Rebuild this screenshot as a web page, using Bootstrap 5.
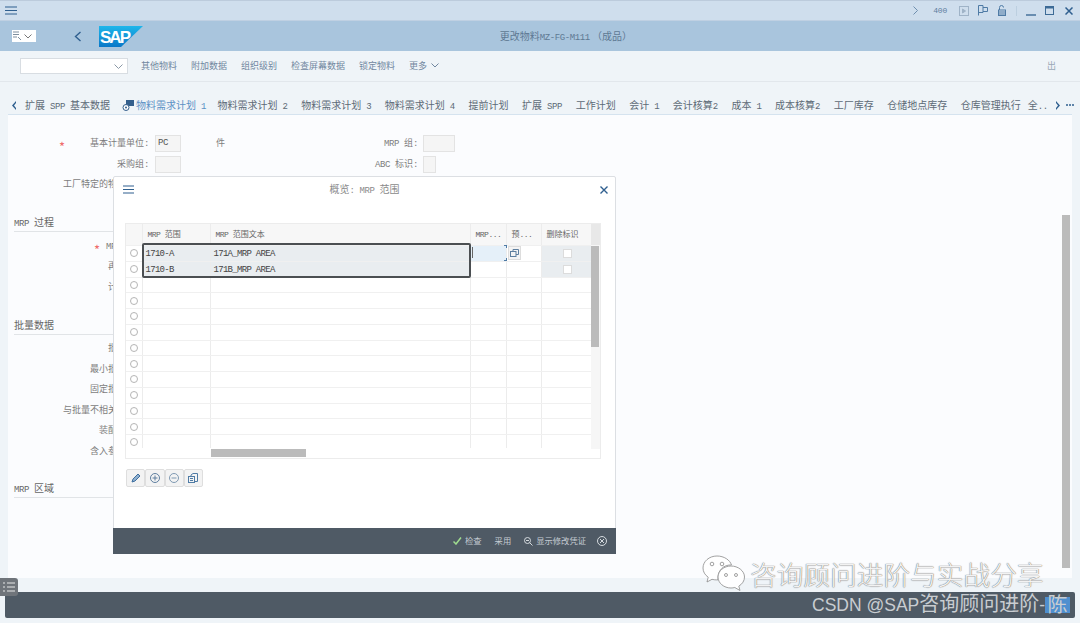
<!DOCTYPE html>
<html lang="zh">
<head>
  <meta charset="UTF-8" />
  <title>更改物料</title>
  <link href="https://cdn.jsdelivr.net/npm/bootstrap@5.3.3/dist/css/bootstrap.min.css" rel="stylesheet" />
  <style>
    html, body { height: 623px; overflow: hidden; }
    body { width: 1080px; background: #eff4f8; color: #7d7d7d; font: 9px/1.2 "Noto Sans CJK SC", sans-serif; position: relative; }
    .lt { font-family: "Liberation Mono", monospace; font-size: 9px; letter-spacing: -.4px; }
    svg { display: block; flex: none; }

    .top-strip { height: 21px; background: #cfdeed; border-top: 1px solid #bccbdc; border-bottom: 1px solid #bfd0e2; padding-left: 5px; padding-right: 7px; color: #5f7f9f; }
    .top-400 { font-size: 8px; margin-left: 15px; letter-spacing: -.2px; }
    .gap-play { margin-left: 12px; }
    .gap-10 { margin-left: 10px; }
    .gap-9 { margin-left: 9px; }
    .gap-11 { margin-left: 11px; }
    .top-sep { width: 1px; height: 10px; background: #bccfe0; margin-left: 10px; }

    .head-strip { height: 30px; background: #a9c5dd; position: relative; }
    .head-title { position: absolute; left: 52px; right: 0; top: 9px; text-align: center; font-size: 10px; color: #5e7993; }
    .tcode-box { margin-left: 12px; height: 12px; background: #fff; width: 24px; }
    .back-arrow { margin-left: 38px; }
    .sap-logo { margin-left: 17px; }

    .tool-strip { height: 31px; border-bottom: 1px solid #e2e7ec; padding-left: 20px; color: #7187a0; }
    .sel-box { width: 108px; height: 16px; background: #fff; border: 1px solid #d8dde2; margin-right: 13px; }
    .tool-a { margin-right: 14px; }
    .tool-out { margin-right: 24px; color: #9aa8b6; }

    .tab-strip { height: 33px; padding-top: 17px; font-size: 10px; color: #5d6a76; white-space: nowrap; border-bottom: 1px solid #d5e3ef; margin-left: 8px; margin-right: 8px; gap: 13.6px; position: relative; }
    .tab-prev { margin: 2px -5.6px 0 3px; }
    .tab-on { color: #5b90c4; position: relative; margin-left: 12.4px; margin-right: -2px; }
    .tab-on::after { content: ""; position: absolute; left: -18px; right: -5px; bottom: -6px; height: 2px; background: #5aa5d6; }
    .tab-icon { position: absolute; left: -14px; top: 1px; }
    .tab-clip { margin-left: -6.6px; }
    .tab-next { margin: 2px 0 0 -6.6px; }
    .tab-more { margin: 5px 0 0 -8.6px; }

    .work-area { height: 463px; margin-left: 8px; margin-right: 8px; background: #fbfcfe; padding-top: 20px; position: relative; }
    .frow { height: 20.5px; }
    .flabel { width: 141px; text-align: right; padding-top: 3px; white-space: nowrap; }
    .flabel-r1 { width: 193px; text-align: right; padding-top: 3px; }
    .flabel-r2 { width: 237px; text-align: right; padding-top: 3px; }
    .fbox { height: 17px; background: #f5f5f5; border: 1px solid #e3e3e3; margin-left: 6px; color: #555; padding-left: 2px; line-height: 15px; }
    .w-pc { width: 26px; }
    .w-mrp { width: 32px; margin-left: 5px; }
    .w-abc { width: 13px; margin-left: 5px; }
    .unit-txt { margin-left: 35px; padding-top: 3px; }
    .star { position: absolute; color: #ef6b6b; font-size: 13px; line-height: 1; }
    .star-a { left: 51px; top: 25px; }
    .star-b { left: 86px; top: 128px; }
    .sect { margin-left: 6px; width: 420px; border-bottom: 1px solid #e1e4e7; font-size: 10px; color: #666; height: 16px; }
    .sect-a { margin-top: 19px; }
    .sect-b { margin-top: 20px; }
    .sect-c { margin-top: 19px; }
    .sp-a { height: 6px; }
    .sp-b { height: 5px; }
    .main-thumb { position: absolute; right: 2px; top: 100px; width: 8px; height: 353px; background: #bbb; }

    .bottom-gap { height: 14px; }
    .foot-strip { height: 26px; margin-left: 5px; margin-right: 5px; background: #4f5a65; border-radius: 2px; }
    .list-chip { position: absolute; left: 0; top: 578px; width: 18px; height: 18px; background: #6f747a; border-radius: 0 3px 3px 0; }

    .over-modal { position: absolute; left: 113px; top: 176px; width: 503px; height: 378px; background: #fff; border: 1px solid #dcdfe3; border-radius: 2px; }
    .modal-head { height: 46px; padding: 0 7px 0 9px; position: relative; }
    .modal-burger { margin-top: 8px; }
    .modal-close { margin-top: 9px; position: relative; }
    .modal-name { position: absolute; left: 0; right: 0; top: 6px; text-align: center; font-size: 10px; color: #8a8a8a; }

    .grid-wrap { position: relative; margin-left: 11px; width: 476px; height: 236px; border: 1px solid #ececec; overflow: hidden; }
    .mrp-grid { table-layout: fixed; width: 465px; margin: 0; border-collapse: collapse; color: #555; }
    .mrp-grid th, .mrp-grid td { padding: 0 0 0 3px; border: 0; border-right: 1px solid #ececec; border-bottom: 1px solid #f0f0f0; background: transparent; box-shadow: none; color: inherit; font-weight: 400; overflow: hidden; white-space: nowrap; vertical-align: middle; }
    .mrp-grid th { height: 21px; background: #f7f7f7; font-size: 8px; padding-left: 5px; color: #666; }
    .mrp-grid th .lt { font-size: 8px; letter-spacing: -.5px; }
    .mrp-grid td { height: 15.75px; line-height: 14px; }
    .mrp-grid td .lt { font-size: 9px; letter-spacing: -.7px; color: #444; }
    .mrp-grid td.rad { padding: 0 0 0 4px; }
    .mrp-grid td.sel-cell { background: #e9edf0; }
    .mrp-grid td.cur-cell { background: #e5f0f9; }
    .c1 { width: 16px; } .c2 { width: 68px; } .c3 { width: 260px; } .c4 { width: 36px; } .c5 { width: 35px; } .c6 { width: 50px; }
    .rad-dot { width: 8px; height: 8px; border: 1px solid #b5b5b5; border-radius: 50%; background: #fff; }
    .chk-box { width: 9px; height: 9px; background: #fff; border: 1px solid #dcdcdc; margin: 0 auto; }
    .mini-btn { width: 13px; height: 14px; background: #f4f4f4; border: 1px solid #ddd; margin-left: -2px; }
    .row-frame { position: absolute; left: 16px; top: 19px; width: 329px; height: 35px; border: 2px solid #4b4f52; border-radius: 2px; pointer-events: none; }
    .cur-mark { position: absolute; left: 345px; top: 21px; width: 36px; height: 16px; }
    .cur-mark::before { content: ""; position: absolute; right: 0; top: 0; width: 3px; height: 3px; border-right: 1px solid #4f7ba5; border-top: 1px solid #4f7ba5; }
    .cur-mark::after { content: ""; position: absolute; right: 0; bottom: 0; width: 3px; height: 3px; border-right: 1px solid #4f7ba5; border-bottom: 1px solid #4f7ba5; }
    .cur-bar { position: absolute; left: 1px; top: 2px; width: 1px; height: 11px; background: #666; }
    .v-rail { position: absolute; right: 0; top: 0; width: 9px; height: 225px; background: #f6f6f6; }
    .v-top { position: absolute; right: 0; top: 0; width: 9px; height: 21px; background: #e8e8e8; }
    .v-thumb { position: absolute; right: 1px; top: 22px; width: 8px; height: 101px; background: #bbb; }
    .h-rail { position: absolute; left: 0; right: 0; top: 224px; height: 12px; background: #fff; }
    .h-thumb { position: absolute; left: 85px; top: 225px; width: 95px; height: 8px; background: #bbb; }

    .btn-row { margin: 10px 0 0 12px; height: 18px; }
    .btn-cell { width: 19.25px; height: 18px; background: #f3f3f3; border: 1px solid #dedede; border-radius: 2px; }

    .modal-foot { position: absolute; left: -1px; right: -1px; bottom: -1px; height: 26px; background: #4f5a65; color: #c5ccd3; padding-right: 9px; font-size: 8.3px; }
    .foot-check { margin-left: 3px; margin-right: 13px; }
    .foot-use { margin-right: 13px; }
    .foot-show { margin-left: 3px; margin-right: 11px; }

    .wm-icon { position: absolute; left: 702px; top: 555px; }
    .wm-text { position: absolute; left: 750px; top: 558px; font-size: 26.7px; line-height: 1.2; color: rgba(255,255,255,.92); text-shadow: 0 0 1px #777, 0 0 1px #777; white-space: nowrap; font-weight: 300; }
    .csdn-mark { position: absolute; left: 812px; top: 593px; font: 17.5px/22px "Liberation Sans", "Noto Sans CJK SC", sans-serif; color: #c9cdd1; white-space: nowrap; }
    .csdn-cn { font-size: 20px; }
    .csdn-last { display: inline-block; width: 25px; height: 16px; line-height: 16px; text-align: center; background: #4f8fcf; vertical-align: -1px; }
  </style>
</head>
<body>
  <div class="top-strip d-flex align-items-center">
    <svg width="12" height="9" viewBox="0 0 12 9" stroke="#2f5f8f" stroke-width="1.2"><path d="M0 1h12M0 4.500h12M0 8h12"/></svg>
    <div class="ms-auto d-flex align-items-center">
      <svg width="5" height="9" viewBox="0 0 5 9" fill="none" stroke="#6f8fae"><path d="M.5.500l4 4-4 4"/></svg>
      <span class="lt top-400">400</span>
      <svg class="gap-play" width="10" height="10" viewBox="0 0 10 10" fill="none" stroke="#9fb3c7"><rect x=".5" y=".5" width="9" height="9"/><path d="M3.500 3l3 2-3 2z" fill="#9fb3c7"/></svg>
      <svg class="gap-9" width="10" height="11" viewBox="0 0 10 11" fill="none" stroke="#4f7ba5"><path d="M.5 10.500V.5h4.500v7H.5M5 2.500h4.500v4H5"/></svg>
      <svg class="gap-10" width="8" height="11" viewBox="0 0 8 11" fill="none" stroke="#4f7ba5"><rect x=".5" y="5" width="7" height="5.500"/><path d="M1.500 5V2.500a2 2 0 0 1 4 0"/><path d="M1 7h6M1 9h6"/></svg>
      <span class="top-sep"></span>
      <svg class="gap-9" width="10" height="10" viewBox="0 0 10 10" stroke="#3d6b96" stroke-width="1.400"><path d="M0 9h10"/></svg>
      <svg class="gap-9" width="9" height="9" viewBox="0 0 9 9" fill="none" stroke="#3d6b96"><rect x=".5" y=".5" width="8" height="8"/><path d="M0 1.500h9" stroke-width="2"/></svg>
      <svg class="gap-11" width="8" height="8" viewBox="0 0 8 8" stroke="#2f5f8f" stroke-width="1.500"><path d="M.5.500l7 7M7.500.500l-7 7"/></svg>
    </div>
  </div>

  <div class="head-strip d-flex align-items-center">
    <div class="tcode-box d-flex align-items-center">
      <svg width="11" height="11" viewBox="0 0 11 11" fill="none" stroke="#7f8f9f"><path d="M1 1h6M1 3.500h6M1 6h4M6 6l3 3"/></svg>
      <svg class="ms-auto me-1" width="8" height="5" viewBox="0 0 8 5" fill="none" stroke="#777"><path d="M.5.500l3.500 3.500 3.500-3.500"/></svg>
    </div>
    <svg class="back-arrow" width="8" height="11" viewBox="0 0 8 11" fill="none" stroke="#2f5f8f" stroke-width="1.400"><path d="M6.500 1l-5 4.500 5 4.500"/></svg>
    <svg class="sap-logo" width="44" height="21" viewBox="0 0 44 21">
      <defs><linearGradient id="sapg" x1="0" y1="0" x2="0" y2="1"><stop offset="0" stop-color="#1eb6ea"/><stop offset="1" stop-color="#0a78c8"/></linearGradient></defs>
      <polygon points="0,0 44,0 22,21 0,21" fill="url(#sapg)"/>
      <text x="1" y="17" font-family="Liberation Sans" font-weight="700" font-size="17" fill="#fff" textLength="31">SAP</text>
    </svg>
    <div class="head-title">更改物料<span class="lt">MZ-FG-M111</span> （成品）</div>
  </div>

  <div class="tool-strip d-flex align-items-center">
    <div class="sel-box d-flex align-items-center justify-content-end pe-1">
      <svg width="9" height="5" viewBox="0 0 9 5" fill="none" stroke="#8a98a6"><path d="M.5.500l4 4 4-4"/></svg>
    </div>
    <span class="tool-a">其他物料</span>
    <span class="tool-a">附加数据</span>
    <span class="tool-a">组织级别</span>
    <span class="tool-a">检查屏幕数据</span>
    <span class="tool-a">锁定物料</span>
    <span class="d-flex align-items-center gap-1">更多
      <svg width="8" height="5" viewBox="0 0 8 5" fill="none" stroke="#7187a0"><path d="M.5.500l3.500 3.500 3.500-3.500"/></svg>
    </span>
    <span class="ms-auto tool-out">出</span>
  </div>

  <div class="tab-strip d-flex">
    <svg class="tab-prev" width="6" height="9" viewBox="0 0 6 9" fill="#2f5f8f"><path d="M5 0L1 4.500 5 9V7L3 4.500 5 2z"/></svg>
    <span>扩展<span class="lt"> SPP </span>基本数据</span>
    <span class="tab-on">物料需求计划<span class="lt"> 1</span>
      <svg class="tab-icon" width="12" height="11" viewBox="0 0 12 11"><rect x="4" y="0" width="8" height="6" fill="#345f8c"/><circle cx="4" cy="7.500" r="3" fill="#fff" stroke="#345f8c"/><circle cx="4" cy="7.500" r="1" fill="#345f8c"/></svg>
    </span>
    <span>物料需求计划<span class="lt"> 2</span></span>
    <span>物料需求计划<span class="lt"> 3</span></span>
    <span>物料需求计划<span class="lt"> 4</span></span>
    <span>提前计划</span>
    <span>扩展<span class="lt"> SPP</span></span>
    <span>工作计划</span>
    <span>会计<span class="lt"> 1</span></span>
    <span>会计核算<span class="lt">2</span></span>
    <span>成本<span class="lt"> 1</span></span>
    <span>成本核算<span class="lt">2</span></span>
    <span>工厂库存</span>
    <span>仓储地点库存</span>
    <span>仓库管理执行</span>
    <span class="tab-clip">全<span class="lt">..</span></span>
    <svg class="tab-next" width="6" height="9" viewBox="0 0 6 9" fill="#2f5f8f"><path d="M1 0l4 4.500L1 9V7l2-2.500L1 2z"/></svg>
    <svg class="tab-more" width="8" height="2" viewBox="0 0 8 2" fill="#2f5f8f"><circle cx="1" cy="1" r="1"/><circle cx="4" cy="1" r="1"/><circle cx="7" cy="1" r="1"/></svg>
  </div>

  <div class="work-area">
    <span class="star star-a">*</span>
    <div class="frow d-flex">
      <div class="flabel">基本计量单位<span class="lt">:</span></div>
      <div class="fbox lt w-pc">PC</div>
      <div class="unit-txt">件</div>
      <div class="flabel-r1"><span class="lt">MRP </span>组<span class="lt">:</span></div>
      <div class="fbox w-mrp"></div>
    </div>
    <div class="frow d-flex">
      <div class="flabel">采购组<span class="lt">:</span></div>
      <div class="fbox w-pc"></div>
      <div class="flabel-r2"><span class="lt">ABC </span>标识<span class="lt">:</span></div>
      <div class="fbox w-abc"></div>
    </div>
    <div class="frow d-flex">
      <div class="flabel">工厂特定的物料状态<span class="lt">:</span></div>
    </div>
    <div class="sect sect-a"><span class="lt">MRP </span>过程</div>
    <span class="star star-b">*</span>
    <div class="sp-a"></div>
    <div class="frow d-flex"><div class="flabel"><span class="lt">MRP </span>类型<span class="lt">:</span></div></div>
    <div class="frow d-flex"><div class="flabel">再订货点<span class="lt">:</span></div></div>
    <div class="frow d-flex"><div class="flabel">计划时界<span class="lt">:</span></div></div>
    <div class="sect sect-b">批量数据</div>
    <div class="sp-b"></div>
    <div class="frow d-flex"><div class="flabel">批量大小<span class="lt">:</span></div></div>
    <div class="frow d-flex"><div class="flabel">最小批量大小<span class="lt">:</span></div></div>
    <div class="frow d-flex"><div class="flabel">固定批量大小<span class="lt">:</span></div></div>
    <div class="frow d-flex"><div class="flabel">与批量不相关的成本<span class="lt">:</span></div></div>
    <div class="frow d-flex"><div class="flabel">装配报废率<span class="lt">:</span></div></div>
    <div class="frow d-flex"><div class="flabel">含入参数文件<span class="lt">:</span></div></div>
    <div class="sect sect-c"><span class="lt">MRP </span>区域</div>
    <div class="main-thumb"></div>
  </div>

  <div class="bottom-gap"></div>
  <div class="foot-strip"></div>

  <div class="list-chip d-flex align-items-center justify-content-center">
    <svg width="12" height="10" viewBox="0 0 12 10" stroke="#e8e8e8" stroke-width="1.200"><path d="M0 1h2M4 1h8M0 5h2M4 5h8M0 9h2M4 9h8"/></svg>
  </div>

  <div class="over-modal">
    <div class="modal-head d-flex">
      <svg class="modal-burger" width="11" height="9" viewBox="0 0 11 9" stroke="#2f5f8f" stroke-width="1.200"><path d="M0 1h11M0 4.500h11M0 8h11"/></svg>
      <div class="modal-name">概览<span class="lt">: MRP </span>范围</div>
      <svg class="ms-auto modal-close" width="8" height="8" viewBox="0 0 8 8" stroke="#2f5f8f" stroke-width="1.400"><path d="M.5.500l7 7M7.500.500l-7 7"/></svg>
    </div>
    <div class="grid-wrap">
      <table class="table mrp-grid">
        <colgroup><col class="c1"><col class="c2"><col class="c3"><col class="c4"><col class="c5"><col class="c6"></colgroup>
        <thead><tr><th></th><th><span class="lt">MRP </span>范围</th><th><span class="lt">MRP </span>范围文本</th><th><span class="lt">MRP...</span></th><th>预<span class="lt">...</span></th><th>删除标识</th></tr></thead>
        <tbody>
          <tr><td class="rad"><div class="rad-dot"></div></td><td class="sel-cell"><span class="lt">1710-A</span></td><td class="sel-cell"><span class="lt">171A_MRP AREA</span></td><td class="cur-cell"></td><td><div class="mini-btn d-flex align-items-center justify-content-center"><svg width="9" height="8" viewBox="0 0 9 8" fill="none" stroke="#5f7f9f"><rect x=".5" y="2.500" width="5.500" height="5"/><path d="M3 2.500V.5h5.500v5H6"/></svg></div></td><td class="sel-cell"><div class="chk-box"></div></td></tr>
          <tr><td class="rad"><div class="rad-dot"></div></td><td class="sel-cell"><span class="lt">1710-B</span></td><td class="sel-cell"><span class="lt">171B_MRP AREA</span></td><td></td><td></td><td class="sel-cell"><div class="chk-box"></div></td></tr>
          <tr><td class="rad"><div class="rad-dot"></div></td><td></td><td></td><td></td><td></td><td></td></tr>
          <tr><td class="rad"><div class="rad-dot"></div></td><td></td><td></td><td></td><td></td><td></td></tr>
          <tr><td class="rad"><div class="rad-dot"></div></td><td></td><td></td><td></td><td></td><td></td></tr>
          <tr><td class="rad"><div class="rad-dot"></div></td><td></td><td></td><td></td><td></td><td></td></tr>
          <tr><td class="rad"><div class="rad-dot"></div></td><td></td><td></td><td></td><td></td><td></td></tr>
          <tr><td class="rad"><div class="rad-dot"></div></td><td></td><td></td><td></td><td></td><td></td></tr>
          <tr><td class="rad"><div class="rad-dot"></div></td><td></td><td></td><td></td><td></td><td></td></tr>
          <tr><td class="rad"><div class="rad-dot"></div></td><td></td><td></td><td></td><td></td><td></td></tr>
          <tr><td class="rad"><div class="rad-dot"></div></td><td></td><td></td><td></td><td></td><td></td></tr>
          <tr><td class="rad"><div class="rad-dot"></div></td><td></td><td></td><td></td><td></td><td></td></tr>
          <tr><td class="rad"><div class="rad-dot"></div></td><td></td><td></td><td></td><td></td><td></td></tr>
        </tbody>
      </table>
      <div class="row-frame"></div>
      <div class="cur-mark"><div class="cur-bar"></div></div>
      <div class="h-rail"></div>
      <div class="v-rail"></div>
      <div class="v-top"></div>
      <div class="v-thumb"></div>
      <div class="h-thumb"></div>
    </div>
    <div class="btn-row d-flex">
      <div class="btn-cell d-flex align-items-center justify-content-center"><svg width="10" height="10" viewBox="0 0 10 10" fill="#8fb0cf" stroke="#3f6f9f"><path d="M1 9l1-3 5-5 2 2-5 5z"/></svg></div>
      <div class="btn-cell d-flex align-items-center justify-content-center"><svg width="10" height="10" viewBox="0 0 10 10" fill="none" stroke="#5f7f9f"><circle cx="5" cy="5" r="4.500"/><path d="M2.500 5h5M5 2.500v5"/></svg></div>
      <div class="btn-cell d-flex align-items-center justify-content-center"><svg width="10" height="10" viewBox="0 0 10 10" fill="none" stroke="#7f99b2"><circle cx="5" cy="5" r="4.500"/><path d="M2.500 5h5"/></svg></div>
      <div class="btn-cell d-flex align-items-center justify-content-center"><svg width="10" height="10" viewBox="0 0 10 10" fill="none" stroke="#4f7ba5"><rect x=".5" y="3.500" width="6" height="6"/><path d="M3 3.500V2L5 .5h4.500v8h-3M2 5.500h3M2 7.500h3"/></svg></div>
    </div>
    <div class="modal-foot d-flex align-items-center justify-content-end">
      <svg width="9" height="8" viewBox="0 0 9 8" fill="none" stroke="#9fdc8f" stroke-width="1.500"><path d="M.5 4.500l2.500 2.500 5-6.500"/></svg>
      <span class="foot-check">检查</span>
      <span class="foot-use">采用</span>
      <svg width="9" height="9" viewBox="0 0 9 9" fill="none" stroke="#d5dade"><circle cx="3.500" cy="3.500" r="3"/><path d="M5.500 5.500l3 3M2 3.500h3"/></svg>
      <span class="foot-show">显示修改凭证</span>
      <svg width="10" height="10" viewBox="0 0 10 10" fill="none" stroke="#d5dade"><circle cx="5" cy="5" r="4.500"/><path d="M3 3l4 4M7 3L3 7"/></svg>
    </div>
  </div>

  <svg class="wm-icon" width="44" height="38" viewBox="0 0 44 38" fill="rgba(255,255,255,.9)" stroke="#8a8a8a" stroke-width=".8">
    <path d="M15 1C7 1 1 6.500 1 13c0 3.800 2 7 5.200 9.200L5 27l5-2.700c1.500.4 3 .6 4.500.6 .6 0 1 0 1.500-.1C15.200 15 22 9.500 29.500 10 28 5 22 1 15 1z"/>
    <path d="M29 11c-7 0-13 4.800-13 11s6 11 13 11c1.300 0 2.600-.2 3.800-.5L38 35.500l-1.200-4.400c3.500-2 5.700-5.300 5.700-9.100 0-6.200-6.500-11-13.500-11z"/>
    <circle cx="10" cy="9" r="1.800" fill="#fff"/><circle cx="20" cy="9" r="1.800" fill="#fff"/><circle cx="24" cy="20" r="1.500" fill="#fff"/><circle cx="34" cy="20" r="1.500" fill="#fff"/>
  </svg>
  <div class="wm-text">咨询顾问进阶与实战分享</div>
  <div class="csdn-mark">CSDN @SAP<span class="csdn-cn">咨询顾问进阶</span>-<span class="csdn-cn csdn-last">陈</span></div>
</body>
</html>
